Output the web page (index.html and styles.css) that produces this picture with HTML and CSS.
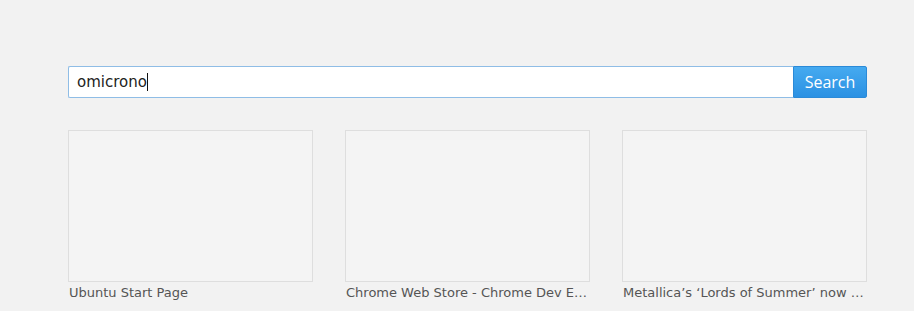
FILE: index.html
```html
<!DOCTYPE html>
<html lang="en">
<head>
    <meta charset="UTF-8">
    <title>New Tab</title>
    <link rel="stylesheet" href="styles.css">
</head>
<body>
<div class="page">
    <form class="search">
        <div class="search-box">omicrono<span class="caret"></span></div>
        <button class="search-btn" type="button">Search</button>
    </form>
    <div class="tiles">
        <div class="tile">
            <div class="thumb"></div>
            <p class="title">Ubuntu Start Page</p>
        </div>
        <div class="tile">
            <div class="thumb"></div>
            <p class="title">Chrome Web Store - Chrome Dev Editor</p>
        </div>
        <div class="tile">
            <div class="thumb"></div>
            <p class="title">Metallica’s ‘Lords of Summer’ now available</p>
        </div>
    </div>
</div>
</body>
</html>
```

FILE: styles.css
```css
body {
    margin: 0;
    background: #f2f2f2;
    font-family: "DejaVu Sans", sans-serif;
}

.page {
    width: 799px;
    padding: 66px 0 0 68px;
}

.search {
    display: flex;
    height: 32px;
    margin: 0;
}

.search-box {
    flex: 1;
    box-sizing: border-box;
    height: 32px;
    border: 1px solid #8fbde6;
    border-right: none;
    border-radius: 2px 0 0 2px;
    background: #fff;
    padding: 0 8px;
    font-size: 15px;
    line-height: 30px;
    color: #222;
}

.caret {
    display: inline-block;
    width: 1px;
    height: 18px;
    background: #111;
    vertical-align: -4px;
}

.search-btn {
    width: 74px;
    height: 32px;
    border: 1px solid #2b8ad8;
    border-radius: 0 2px 2px 0;
    background: linear-gradient(#45aaf0, #2b91e3);
    color: #fff;
    font-family: "Open Sans", sans-serif;
    font-size: 16px;
    padding: 0;
}

.tiles {
    display: flex;
    gap: 32px;
    margin-top: 32px;
}

.tile {
    width: 245px;
}

.thumb {
    box-sizing: border-box;
    height: 152px;
    border: 1px solid #dedede;
    background: #f4f4f4;
}

.title {
    margin: 3px 0 0 1px;
    font-size: 13px;
    color: #555;
    white-space: nowrap;
    overflow: hidden;
    text-overflow: ellipsis;
}
```
